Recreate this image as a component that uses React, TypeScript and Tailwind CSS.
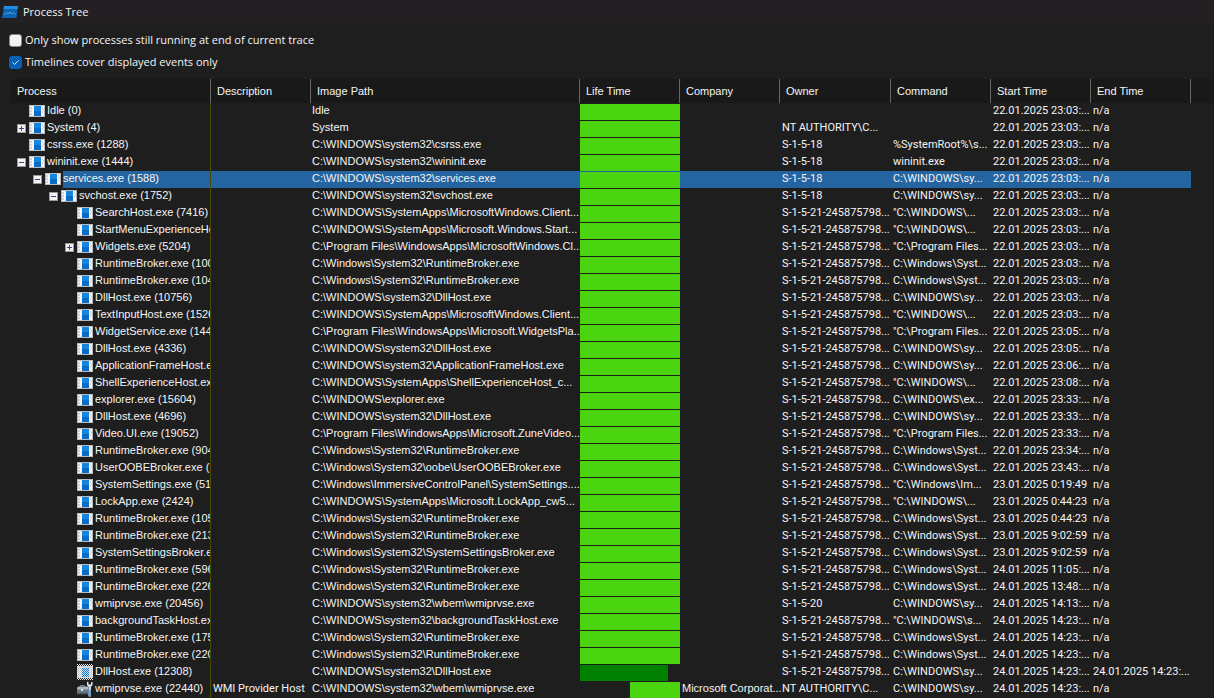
import { useState } from "react"

type NodeState = "open" | "closed" | "leaf"
type IconKind = "app" | "exited" | "tools"

interface ProcessRow {
  depth: number
  name: string
  path: string
  owner: string
  command: string
  start: string
  end: string
  node: NodeState
  icon: IconKind
  description: string
  company: string
  bar: { left: number; width: number; ended?: boolean }
}

const USER_SID = "S-1-5-21-245875798..."
const SYSTEM_SID = "S-1-5-18"
const SYSTEM_ACCOUNT = "NT AUTHORITY\\C..."
const CMD_WINDOWS = "C:\\WINDOWS\\sy..."
const CMD_QUOTED = "\"C:\\WINDOWS\\..."
const CMD_SYSTEM32 = "C:\\Windows\\Syst..."
const CMD_PROGRAMS = "\"C:\\Program Files..."
const BROKER_PATH = "C:\\Windows\\System32\\RuntimeBroker.exe"
const DLLHOST_PATH = "C:\\WINDOWS\\system32\\DllHost.exe"

function row(
  depth: number,
  name: string,
  path: string,
  owner: string,
  command: string,
  start: string,
  extra: Partial<ProcessRow> = {}
): ProcessRow {
  return {
    depth,
    name,
    path,
    owner,
    command,
    start,
    end: "n/a",
    node: "leaf",
    icon: "app",
    description: "",
    company: "",
    bar: { left: 0, width: 100 },
    ...extra,
  }
}

const PROCESSES: ProcessRow[] = [
  row(0, "Idle (0)", "Idle", "", "", "22.01.2025 23:03:..."),
  row(0, "System (4)", "System", SYSTEM_ACCOUNT, "", "22.01.2025 23:03:...", { node: "closed" }),
  row(0, "csrss.exe (1288)", "C:\\WINDOWS\\system32\\csrss.exe", SYSTEM_SID, "%SystemRoot%\\s...", "22.01.2025 23:03:..."),
  row(0, "wininit.exe (1444)", "C:\\WINDOWS\\system32\\wininit.exe", SYSTEM_SID, "wininit.exe", "22.01.2025 23:03:...", { node: "open" }),
  row(1, "services.exe (1588)", "C:\\WINDOWS\\system32\\services.exe", SYSTEM_SID, CMD_WINDOWS, "22.01.2025 23:03:...", { node: "open" }),
  row(2, "svchost.exe (1752)", "C:\\WINDOWS\\system32\\svchost.exe", SYSTEM_SID, CMD_WINDOWS, "22.01.2025 23:03:...", { node: "open" }),
  row(3, "SearchHost.exe (7416)", "C:\\WINDOWS\\SystemApps\\MicrosoftWindows.Client...", USER_SID, CMD_QUOTED, "22.01.2025 23:03:..."),
  row(3, "StartMenuExperienceHost.exe", "C:\\WINDOWS\\SystemApps\\Microsoft.Windows.Start...", USER_SID, CMD_QUOTED, "22.01.2025 23:03:..."),
  row(3, "Widgets.exe (5204)", "C:\\Program Files\\WindowsApps\\MicrosoftWindows.Cl...", USER_SID, CMD_PROGRAMS, "22.01.2025 23:03:...", { node: "closed" }),
  row(3, "RuntimeBroker.exe (1008)", BROKER_PATH, USER_SID, CMD_SYSTEM32, "22.01.2025 23:03:..."),
  row(3, "RuntimeBroker.exe (1040)", BROKER_PATH, USER_SID, CMD_SYSTEM32, "22.01.2025 23:03:..."),
  row(3, "DllHost.exe (10756)", DLLHOST_PATH, USER_SID, CMD_WINDOWS, "22.01.2025 23:03:..."),
  row(3, "TextInputHost.exe (1526)", "C:\\WINDOWS\\SystemApps\\MicrosoftWindows.Client...", USER_SID, CMD_QUOTED, "22.01.2025 23:03:..."),
  row(3, "WidgetService.exe (1440)", "C:\\Program Files\\WindowsApps\\Microsoft.WidgetsPla...", USER_SID, CMD_PROGRAMS, "22.01.2025 23:05:..."),
  row(3, "DllHost.exe (4336)", DLLHOST_PATH, USER_SID, CMD_WINDOWS, "22.01.2025 23:05:..."),
  row(3, "ApplicationFrameHost.exe", "C:\\WINDOWS\\system32\\ApplicationFrameHost.exe", USER_SID, CMD_WINDOWS, "22.01.2025 23:06:..."),
  row(3, "ShellExperienceHost.exe", "C:\\WINDOWS\\SystemApps\\ShellExperienceHost_c...", USER_SID, CMD_QUOTED, "22.01.2025 23:08:..."),
  row(3, "explorer.exe (15604)", "C:\\WINDOWS\\explorer.exe", USER_SID, "C:\\WINDOWS\\ex...", "22.01.2025 23:33:..."),
  row(3, "DllHost.exe (4696)", DLLHOST_PATH, USER_SID, CMD_WINDOWS, "22.01.2025 23:33:..."),
  row(3, "Video.UI.exe (19052)", "C:\\Program Files\\WindowsApps\\Microsoft.ZuneVideo...", USER_SID, CMD_PROGRAMS, "22.01.2025 23:33:..."),
  row(3, "RuntimeBroker.exe (9044)", BROKER_PATH, USER_SID, CMD_SYSTEM32, "22.01.2025 23:34:..."),
  row(3, "UserOOBEBroker.exe (1", "C:\\Windows\\System32\\oobe\\UserOOBEBroker.exe", USER_SID, CMD_SYSTEM32, "22.01.2025 23:43:..."),
  row(3, "SystemSettings.exe (5172)", "C:\\Windows\\ImmersiveControlPanel\\SystemSettings....", USER_SID, "\"C:\\Windows\\Im...", "23.01.2025 0:19:49"),
  row(3, "LockApp.exe (2424)", "C:\\WINDOWS\\SystemApps\\Microsoft.LockApp_cw5...", USER_SID, CMD_QUOTED, "23.01.2025 0:44:23"),
  row(3, "RuntimeBroker.exe (1056)", BROKER_PATH, USER_SID, CMD_SYSTEM32, "23.01.2025 0:44:23"),
  row(3, "RuntimeBroker.exe (2132)", BROKER_PATH, USER_SID, CMD_SYSTEM32, "23.01.2025 9:02:59"),
  row(3, "SystemSettingsBroker.exe", "C:\\Windows\\System32\\SystemSettingsBroker.exe", USER_SID, CMD_SYSTEM32, "23.01.2025 9:02:59"),
  row(3, "RuntimeBroker.exe (5964)", BROKER_PATH, USER_SID, CMD_SYSTEM32, "24.01.2025 11:05:..."),
  row(3, "RuntimeBroker.exe (2260)", BROKER_PATH, USER_SID, CMD_SYSTEM32, "24.01.2025 13:48:..."),
  row(3, "wmiprvse.exe (20456)", "C:\\WINDOWS\\system32\\wbem\\wmiprvse.exe", "S-1-5-20", CMD_WINDOWS, "24.01.2025 14:13:..."),
  row(3, "backgroundTaskHost.exe", "C:\\WINDOWS\\system32\\backgroundTaskHost.exe", USER_SID, "\"C:\\WINDOWS\\s...", "24.01.2025 14:23:..."),
  row(3, "RuntimeBroker.exe (1750)", BROKER_PATH, USER_SID, CMD_SYSTEM32, "24.01.2025 14:23:..."),
  row(3, "RuntimeBroker.exe (2208)", BROKER_PATH, USER_SID, CMD_SYSTEM32, "24.01.2025 14:23:..."),
  row(3, "DllHost.exe (12308)", DLLHOST_PATH, USER_SID, CMD_WINDOWS, "24.01.2025 14:23:...", {
    end: "24.01.2025 14:23:...",
    icon: "exited",
    bar: { left: 0, width: 88, ended: true },
  }),
  row(3, "wmiprvse.exe (22440)", "C:\\WINDOWS\\system32\\wbem\\wmiprvse.exe", SYSTEM_ACCOUNT, CMD_WINDOWS, "24.01.2025 14:23:...", {
    icon: "tools",
    description: "WMI Provider Host",
    company: "Microsoft Corporat...",
    bar: { left: 50, width: 50 },
  }),
]

const COLUMNS = [
  { title: "Process", width: "w-[200px]" },
  { title: "Description", width: "w-[100px]" },
  { title: "Image Path", width: "w-[269px]" },
  { title: "Life Time", width: "w-[100px]" },
  { title: "Company", width: "w-[100px]" },
  { title: "Owner", width: "w-[111px]" },
  { title: "Command", width: "w-[100px]" },
  { title: "Start Time", width: "w-[100px]" },
  { title: "End Time", width: "w-[100px]" },
]

const INDENT = ["pl-1.5", "pl-[22px]", "pl-[38px]", "pl-[54px]"]

function TitleIcon() {
  return (
    <svg width="16" height="14" viewBox="0 0 16 14" aria-hidden="true">
      <path d="M2 1h14l-1.500 12H0z" fill="#0f64b0" />
      <path d="M2 1h14l-0.400 3H1.600z" fill="#1f8fe6" />
      <path d="M2 10l2.500-2.500 1.500 1.500L8 7l2 2 1.500-1.500L13.500 9.500" fill="none" stroke="#4aa8ee" strokeWidth="1" />
    </svg>
  )
}

function AppIcon() {
  return (
    <svg width="16" height="12" viewBox="0 0 16 12" shapeRendering="crispEdges" aria-hidden="true">
      <rect width="16" height="12" fill="#b9bcbe" />
      <rect x="1" y="1" width="14" height="10" fill="#f6f6f6" />
      <path d="M1 2h2v2H1zM1 5h2v2H1zM1 8h2v2H1zM13 2h1v2h-1zM14 4h1v2h-1zM13 6h1v2h-1z" fill="#cfd2d4" />
      <rect x="5" y="1" width="7" height="10" fill="#0a6cc4" />
      <rect x="5" y="1" width="7" height="5" fill="#1685dc" />
    </svg>
  )
}

function ExitedIcon() {
  return (
    <svg width="16" height="16" viewBox="0 0 16 16" shapeRendering="crispEdges" aria-hidden="true">
      <defs>
        <pattern id="dither-edge" width="2" height="2" patternUnits="userSpaceOnUse">
          <path d="M0 0h1v1H0zM1 1h1v1H1z" fill="#e4e4e4" />
        </pattern>
        <pattern id="dither-face" width="2" height="2" patternUnits="userSpaceOnUse">
          <path d="M0 0h1v1H0zM1 1h1v1H1z" fill="#c6dff2" />
        </pattern>
      </defs>
      <rect y="2" width="16" height="12" fill="#c9cbcc" />
      <rect y="2" width="16" height="12" fill="url(#dither-edge)" />
      <rect x="5" y="4" width="7" height="9" fill="#1778cb" />
      <rect x="5" y="4" width="7" height="9" fill="url(#dither-face)" />
      <rect width="16" height="2" fill="url(#dither-edge)" />
      <rect y="14" width="16" height="2" fill="url(#dither-edge)" />
    </svg>
  )
}

function ToolsIcon() {
  return (
    <svg width="16" height="16" viewBox="0 0 16 16" aria-hidden="true">
      <path d="M3.500 5.500V4.500h4v1" fill="none" stroke="#7d868d" strokeWidth="1" />
      <path d="M0.500 6h10.500v7H0V7z" fill="#6b7780" />
      <path d="M1 5.500h10l0.500 3H0z" fill="#aeb7bd" />
      <path d="M4 8h2v2H4z" fill="#e3e7ea" />
      <path d="M0 12h11v1.500H0z" fill="#48525a" />
      <path d="M10 0.500v3.500l1.500 1.700h2.500L15.500 4V0.500L14 1.500V3.500h-2.500V1.500z" fill="#e6eef5" />
      <path d="M11.500 5h2.500v9.500a1.200 1.200 0 0 1-2.500 0z" fill="#c3d3e2" />
      <path d="M11.500 9h2.500v5.500a1.200 1.200 0 0 1-2.500 0z" fill="#6fa0cf" />
    </svg>
  )
}

function ProcessIcon({ kind }: { kind: IconKind }) {
  if (kind === "exited") return <ExitedIcon />
  if (kind === "tools") return <ToolsIcon />
  return <AppIcon />
}

function Expander({ state, name }: { state: NodeState; name: string }) {
  if (state === "leaf") return <span className="w-[9px] shrink-0" />
  const closed = state === "closed"
  return (
    <button
      type="button"
      aria-label={`${closed ? "Expand" : "Collapse"} ${name}`}
      className="mt-1 block h-[9px] w-[9px] shrink-0"
    >
      <svg width="9" height="9" viewBox="0 0 9 9" shapeRendering="crispEdges" className="block">
        <rect width="9" height="9" fill="#989898" />
        <rect x="1" y="1" width="7" height="7" fill="#f4f4f4" />
        <path d={closed ? "M2 4h5v1H2zM4 2h1v5H4z" : "M2 4h5v1H2z"} fill="#32488f" />
      </svg>
    </button>
  )
}

interface OptionProps {
  id: string
  label: string
  checked: boolean
  onChange: (checked: boolean) => void
}

function Option({ id, label, checked, onChange }: OptionProps) {
  return (
    <div className="flex h-[22px] items-center gap-[3px]">
      <span className="grid size-[13px] place-items-center">
        <input
          id={id}
          type="checkbox"
          checked={checked}
          onChange={(e) => onChange(e.target.checked)}
          className="peer col-start-1 row-start-1 size-[13px] appearance-none rounded-[3px] border border-[#8a8a8a] bg-[#f3f3f3] checked:border-[#0560b6] checked:bg-[#0560b6]"
        />
        <svg
          viewBox="0 0 13 13"
          className="pointer-events-none invisible col-start-1 row-start-1 size-[13px] peer-checked:visible"
          aria-hidden="true"
        >
          <path d="M3.500 6.500l2 2L9.500 4.500" fill="none" stroke="#d5e6f5" strokeWidth="1" />
        </svg>
      </span>
      <label htmlFor={id}>{label}</label>
    </div>
  )
}

export default function App() {
  const [onlyRunning, setOnlyRunning] = useState(false)
  const [coverDisplayed, setCoverDisplayed] = useState(true)
  const [selected, setSelected] = useState(4)

  return (
    <div className="h-screen overflow-hidden bg-[#1e1e1e] font-['Open_Sans','Noto_Sans',sans-serif] text-[11px] text-[#f5f5f5]">
      <header className="flex h-[23px] items-center gap-[5px] bg-[#231f22] pt-px pl-0.5">
        <TitleIcon />
        <h1>Process Tree</h1>
      </header>

      <div className="pt-1.5 pl-[9px]">
        <Option
          id="only-running"
          label="Only show processes still running at end of current trace"
          checked={onlyRunning}
          onChange={setOnlyRunning}
        />
        <Option
          id="cover-displayed"
          label="Timelines cover displayed events only"
          checked={coverDisplayed}
          onChange={setCoverDisplayed}
        />
      </div>

      <div className="mt-1.5 pl-[11px] font-['Liberation_Sans',Arial,sans-serif] text-[11px] leading-[14px]">
        <table className="w-full table-fixed border-collapse">
          <colgroup>
            {COLUMNS.map((c) => (
              <col key={c.title} className={c.width} />
            ))}
            <col />
          </colgroup>
          <thead>
            <tr className="h-6 bg-[#191919]">
              {COLUMNS.map((c) => (
                <th key={c.title} className="p-0 text-left font-normal">
                  <div className="h-6 border-r border-[#666666] pl-1.5 leading-6">{c.title}</div>
                </th>
              ))}
              <td />
            </tr>
          </thead>
          <tbody>
            {PROCESSES.map((p, i) => {
              const fill = i === selected ? "bg-[#2464a0]" : ""
              const cell = `p-0 pl-0.5 align-top whitespace-nowrap ${fill}`
              const narrow = `p-0 pt-px pl-0.5 align-top font-[Roboto,sans-serif] whitespace-nowrap ${fill}`
              return (
                <tr key={i} className="h-[17px]" onClick={() => setSelected(i)}>
                  <td className="p-0 align-top">
                    <div className={`flex h-[17px] items-start gap-0.5 overflow-hidden border-r border-[#4a4a00] ${INDENT[p.depth]}`}>
                      <Expander state={p.node} name={p.name} />
                      <span className={`ml-px w-4 shrink-0 ${p.icon === "app" ? "pt-0.5" : ""}`}>
                        <ProcessIcon kind={p.icon} />
                      </span>
                      <span className={`h-[17px] min-w-0 flex-1 overflow-hidden whitespace-nowrap ${fill}`}>{p.name}</span>
                    </div>
                  </td>
                  <td className={narrow}>{p.description}</td>
                  <td className={`p-0 pl-px align-top whitespace-nowrap ${fill}`}>{p.path}</td>
                  <td className={`p-0 ${fill}`}>
                    <div className="flex h-[17px] pt-px">
                      <div
                        className={p.bar.ended ? "bg-[#008000]" : "bg-[#4ad510]"}
                        style={{ marginLeft: `${p.bar.left}%`, width: `${p.bar.width}%` }}
                      />
                    </div>
                  </td>
                  <td className={cell}>{p.company}</td>
                  <td className={narrow}>{p.owner}</td>
                  <td className={narrow}>{p.command}</td>
                  <td className={narrow}>{p.start}</td>
                  <td className={narrow}>{p.end}</td>
                  <td />
                </tr>
              )
            })}
          </tbody>
        </table>
      </div>
    </div>
  )
}
